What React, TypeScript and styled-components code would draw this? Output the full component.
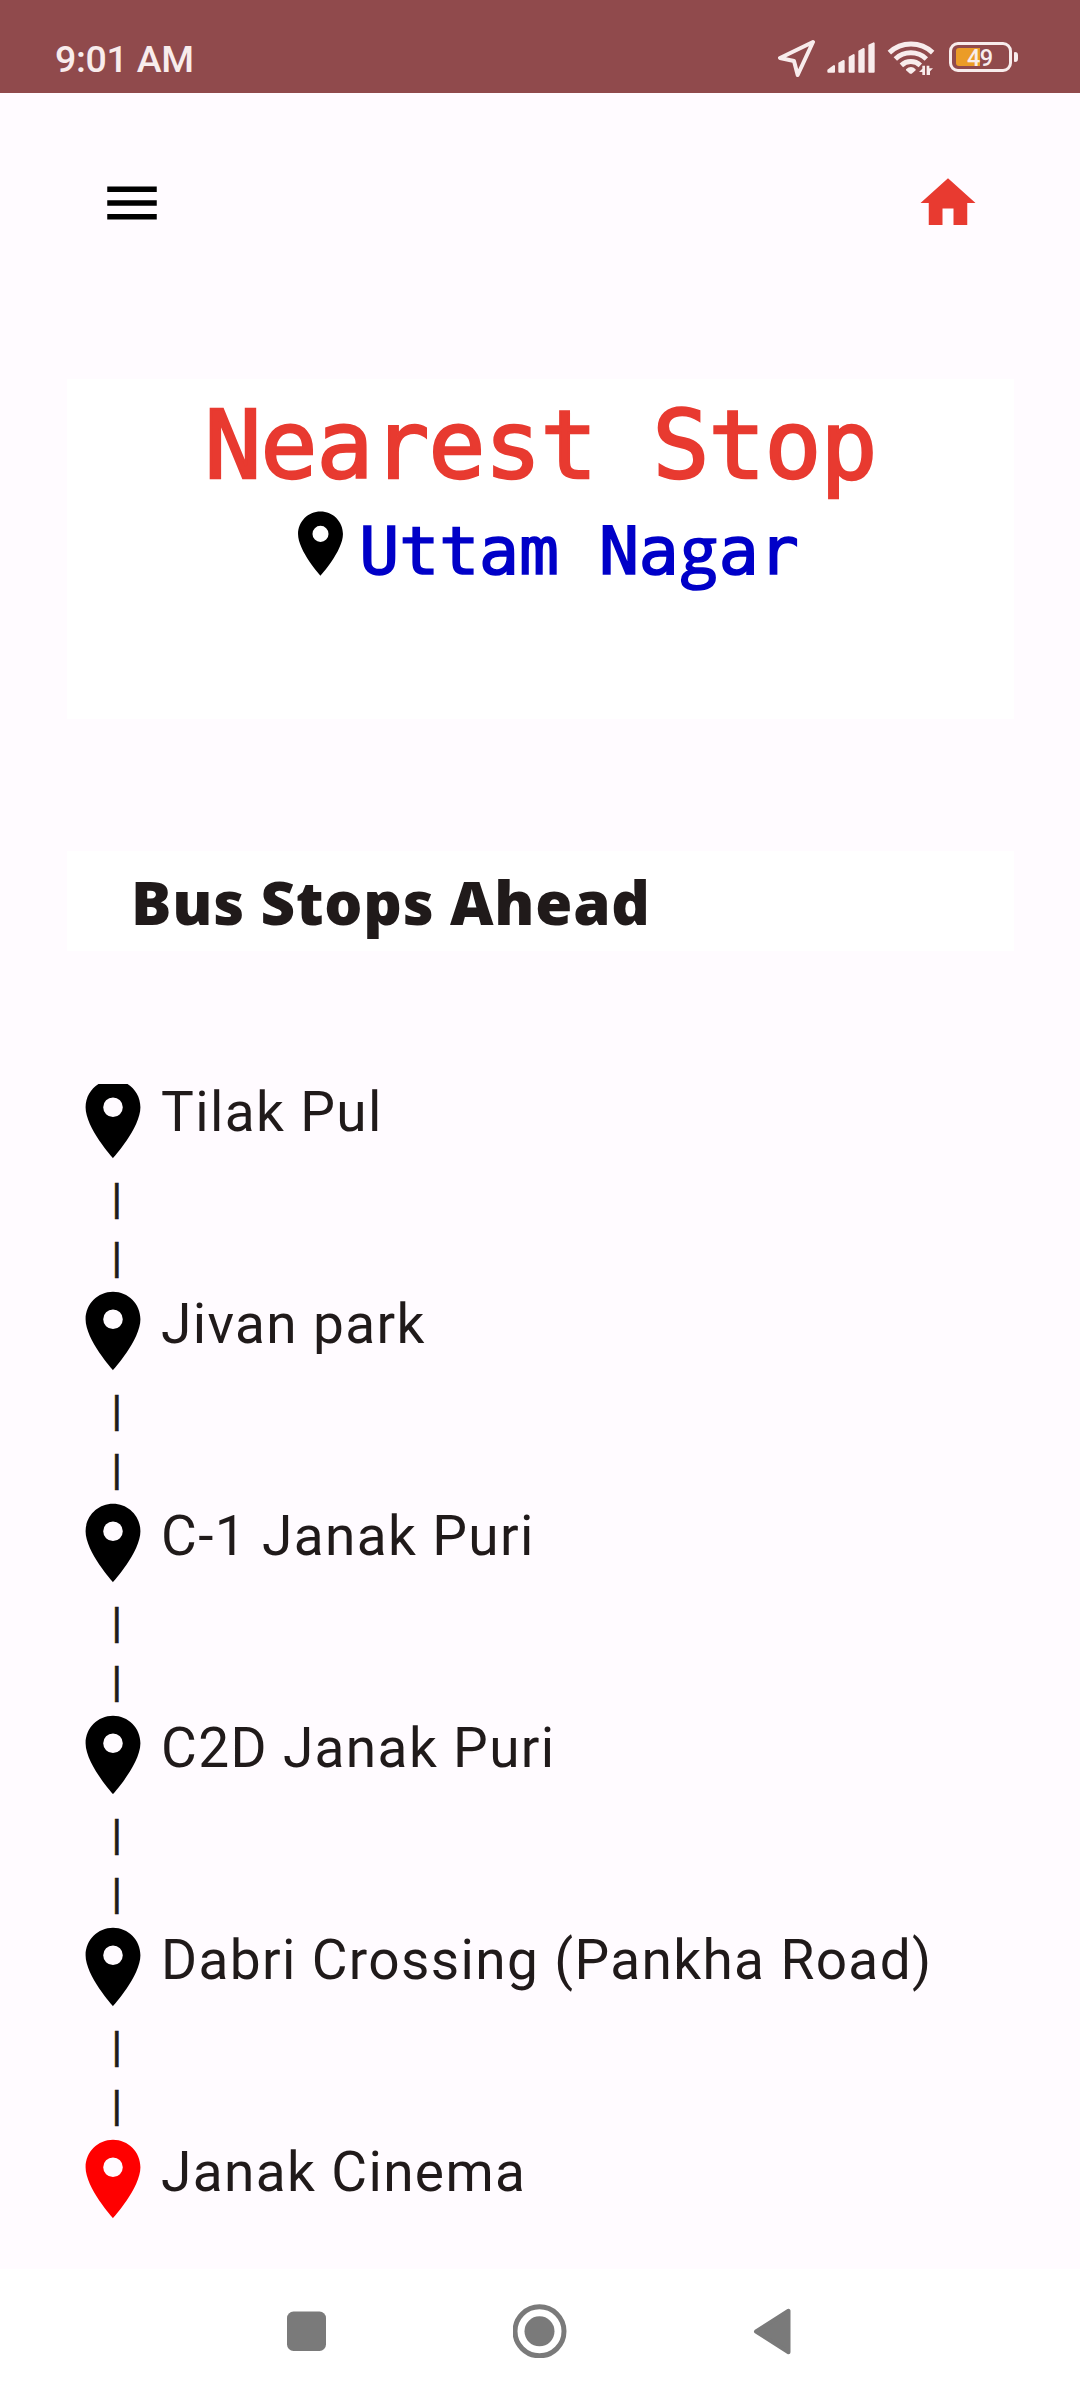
import React from "react";
import styled, { createGlobalStyle } from "styled-components";

const GlobalStyle = createGlobalStyle`
  * { box-sizing: border-box; }
  html, body { margin: 0; padding: 0; background: #fffbff; }
`;

const Screen = styled.div`
  display: flex;
  flex-direction: column;
  width: 1080px;
  height: 2400px;
  overflow: hidden;
  background: #fffbff;
  color: #201a1a;
  font-family: Roboto, "Noto Sans", sans-serif;
`;

const StatusBar = styled.header`
  display: flex;
  flex: none;
  justify-content: space-between;
  align-items: flex-start;
  height: 93px;
  padding: 39px 62px 0 55px;
  background: #904a4c;
  color: #f8ecec;
`;

const Clock = styled.span`
  font-size: 37.5px;
  line-height: 40px;
  font-weight: 500;
  letter-spacing: -0.3px;
  white-space: pre;
`;

const StatusIcons = styled.div`
  display: flex;
  align-items: flex-start;
`;

const Glyph = styled.svg<{ $gap?: number }>`
  display: block;
  flex: none;
  margin-right: ${(p) => p.$gap ?? 0}px;
`;

const Battery = styled.div`
  display: flex;
  align-items: center;
  margin-top: 3px;
`;

const BatteryBody = styled.div`
  position: relative;
  width: 63px;
  height: 30px;
  padding: 3px 4px;
  border: 3px solid #f8ecec;
  border-radius: 9px;
`;

const BatteryFill = styled.div`
  width: 24px;
  height: 18px;
  border-radius: 3px 0 0 3px;
  background: #eb9c27;
`;

const BatteryText = styled.span`
  position: absolute;
  left: 15px;
  top: 1px;
  font-size: 23.5px;
  line-height: 24px;
  font-weight: 500;
  letter-spacing: -0.5px;
`;

const BatteryTip = styled.div`
  width: 4px;
  height: 10px;
  margin-left: 2px;
  border-radius: 1px 3px 3px 1px;
  background: #f8ecec;
`;

const TopBar = styled.nav`
  display: flex;
  flex: none;
  justify-content: space-between;
  height: 286px;
  padding: 77px 99px 0;
`;

const NearestCard = styled.section`
  display: flex;
  flex: none;
  flex-direction: column;
  align-items: center;
  height: 340px;
  margin: 0 66px 132px 67px;
  background: #fff;
`;

const mono = `"DejaVu Sans Mono", "Liberation Mono", monospace`;

const NearestTitle = styled.h1`
  margin: 0;
  padding-top: 10px;
  font-family: ${mono};
  font-size: 94.5px;
  line-height: 112px;
  font-weight: 400;
  letter-spacing: -0.9px;
  color: #e83a30;
  -webkit-text-stroke: 2.4px #e83a30;
  white-space: pre;
`;

const NearestRow = styled.div`
  display: flex;
  align-items: flex-start;
  padding-top: 4px;
`;

const NearestName = styled.span`
  padding-top: 3px;
  font-family: ${mono};
  font-size: 66.5px;
  line-height: 80px;
  letter-spacing: -0.1px;
  color: #0000c8;
  -webkit-text-stroke: 1.7px #0000c8;
  white-space: pre;
`;

const LoopedG = styled.span`
  display: inline-block;
  width: 40px;
  font-family: "Open Sans", sans-serif;
  text-align: center;
`;

const AheadCard = styled.section`
  flex: none;
  height: 100px;
  margin: 0 66px 133px 67px;
  padding-left: 64px;
  background: #fff;
`;

const AheadTitle = styled.h2`
  margin: 0;
  font-family: "Noto Sans", sans-serif;
  font-size: 60px;
  line-height: 102px;
  font-weight: 900;
  letter-spacing: 0.8px;
  word-spacing: -1px;
  white-space: pre;
`;

const StopList = styled.ul`
  flex: 1;
  min-height: 0;
  margin: 0;
  padding: 0 66px;
  list-style: none;
`;

const Stop = styled.li<{ $first: boolean }>`
  height: ${(p) => (p.$first ? 200 : 212)}px;
`;

const StopRow = styled.div<{ $first: boolean }>`
  display: flex;
  align-items: flex-end;
  height: ${(p) => (p.$first ? 82 : 94)}px;
`;

const StopName = styled.span`
  padding: 0 0 27px 1px;
  font-size: 55px;
  line-height: 54px;
  letter-spacing: 1.36px;
  white-space: pre;
`;

const Dash = styled.div`
  height: 59px;
  padding-left: 45.5px;
  font-size: 43px;
  line-height: 64px;
  -webkit-text-stroke: 0.6px #201a1a;
`;

const NavBar = styled.footer`
  display: flex;
  flex: none;
  justify-content: space-between;
  align-items: flex-start;
  height: 131px;
  padding: 35px 286px 0;
  background: #fff;
`;

interface PinProps {
  size: number;
  color: string;
  /** Pixels hidden at the top edge, for a pin scrolled partly out of view. */
  cut?: number;
}

function Pin({ size, color, cut = 0 }: PinProps) {
  const offset = (cut * 24) / size;
  return (
    <Glyph
      width={size}
      height={size - cut}
      viewBox={`0 ${offset} 24 ${24 - offset}`}
      fill={color}
    >
      <path d="M12 2C8.13 2 5 5.13 5 9c0 5.25 7 13 7 13s7-7.75 7-13c0-3.87-3.13-7-7-7zm0 9.5a2.5 2.5 0 0 1 0-5 2.5 2.5 0 0 1 0 5z" />
    </Glyph>
  );
}

const stops = [
  "Tilak Pul",
  "Jivan park",
  "C-1 Janak Puri",
  "C2D Janak Puri",
  "Dabri Crossing (Pankha Road)",
  "Janak Cinema",
];

export default function App() {
  return (
    <Screen>
      <GlobalStyle />
      <StatusBar>
        <Clock>9:01 AM</Clock>
        <StatusIcons>
          <Glyph width="38" height="40" viewBox="114 117 114 120" $gap={11}>
            <path
              d="M219 126L120 174L162 183L173 225Z"
              fill="none"
              stroke="#f8ecec"
              strokeWidth="12"
              strokeLinejoin="round"
            />
          </Glyph>
          <Glyph width="49" height="40" viewBox="261 117 147 120" $gap={11}>
            <g fill="#f8ecec" stroke="#f8ecec" strokeWidth="6" strokeLinejoin="round">
              <path d="M265 211L282 198V215H265Z" />
              <path d="M298 190L311 183V215H298Z" />
              <path d="M329 172L341 165V215H329Z" />
              <path d="M358 154L371 147V215H358Z" />
              <path d="M388 136L401 130V215H388Z" />
            </g>
          </Glyph>
          <Glyph width="49" height="40" viewBox="441 117 147 120" $gap={13}>
            <g fill="none" stroke="#f8ecec" strokeWidth="15">
              <path d="M448 158A95 95 0 0 1 578 158" />
              <path d="M466 177A68 68 0 0 1 559 177" />
              <path d="M484 196A42 42 0 0 1 541 196" />
            </g>
            <path
              d="M498 208Q513 194 527 208V211L515 221H510L498 211Z"
              fill="#f8ecec"
            />
            <path
              d="M547 197H555V225H547V216H537L547 206ZM560 197L568 197V205H579L570 214V225H560Z"
              fill="#f8ecec"
            />
          </Glyph>
          <Battery>
            <BatteryBody>
              <BatteryFill />
              <BatteryText>49</BatteryText>
            </BatteryBody>
            <BatteryTip />
          </Battery>
        </StatusIcons>
      </StatusBar>

      <TopBar>
        <Glyph width="66" height="66" viewBox="0 0 24 24" fill="#000">
          <path d="M3 18h18v-2H3v2zm0-5h18v-2H3v2zm0-7v2h18V6H3z" />
        </Glyph>
        <Glyph width="66" height="66" viewBox="0 0 24 24" fill="#e83a30">
          <path d="M10 20v-6h4v6h5v-8h3L12 3 2 12h3v8z" />
        </Glyph>
      </TopBar>

      <NearestCard>
        <NearestTitle>Nearest Stop</NearestTitle>
        <NearestRow>
          <Pin size={77} color="#000" />
          <NearestName>
            Uttam Na<LoopedG>g</LoopedG>ar
          </NearestName>
        </NearestRow>
      </NearestCard>

      <AheadCard>
        <AheadTitle>Bus Stops Ahead</AheadTitle>
      </AheadCard>

      <StopList>
        {stops.map((name, i) => (
          <Stop key={name} $first={i === 0}>
            <StopRow $first={i === 0}>
              <Pin
                size={94}
                color={i === stops.length - 1 ? "#f00" : "#000"}
                cut={i === 0 ? 12 : 0}
              />
              <StopName>{name}</StopName>
            </StopRow>
            {i < stops.length - 1 && (
              <>
                <Dash>|</Dash>
                <Dash>|</Dash>
              </>
            )}
          </Stop>
        ))}
      </StopList>

      <NavBar>
        <Glyph width="54" height="54" viewBox="0 0 54 54" fill="#7a7a7a">
          <rect x="1" y="7.5" width="39" height="39.5" rx="6.5" />
        </Glyph>
        <Glyph width="54" height="54" viewBox="0 0 54 54">
          <circle cx="26.5" cy="27.3" r="24.5" fill="none" stroke="#7a7a7a" strokeWidth="5" />
          <circle cx="26.5" cy="27.3" r="15" fill="#7a7a7a" />
        </Glyph>
        <Glyph width="54" height="54" viewBox="0 0 54 54">
          <path
            d="M48.5 6.8V48.2L16 27.5Z"
            fill="#7a7a7a"
            stroke="#7a7a7a"
            strokeWidth="4"
            strokeLinejoin="round"
          />
        </Glyph>
      </NavBar>
    </Screen>
  );
}
